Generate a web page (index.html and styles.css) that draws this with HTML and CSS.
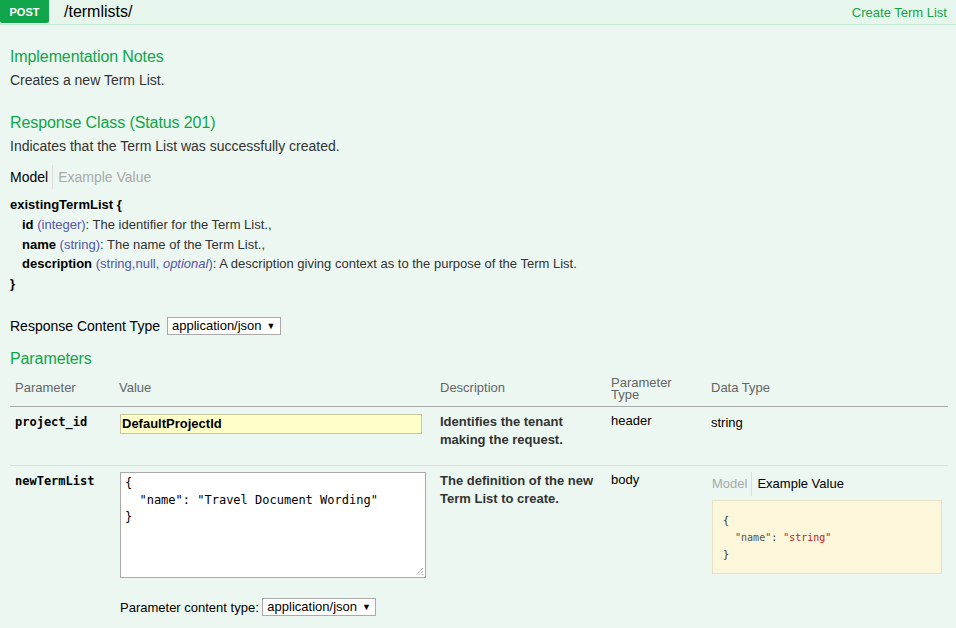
FILE: index.html
```html
<!DOCTYPE html>
<html>
<head>
<meta charset="utf-8">
<link rel="stylesheet" href="styles.css">
</head>
<body>
<div class="op">
  <div class="op-head">
    <span class="verb">POST</span>
    <span class="path">/termlists/</span>
    <span class="summary">Create Term List</span>
  </div>
  <div class="content">
    <h4 class="title t1">Implementation Notes</h4>
    <p class="text">Creates a new Term List.</p>
    <h4 class="title t2">Response Class (Status 201)</h4>
    <p class="text">Indicates that the Term List was successfully created.</p>
    <div class="tabs tabs-main">
      <span class="tab active">Model</span>
      <span class="tab">Example Value</span>
    </div>
    <div class="model">
      <div class="mline"><b>existingTermList {</b></div>
      <div class="mline ind"><b>id</b> <span class="type">(integer)</span>: The identifier for the Term List.,</div>
      <div class="mline ind"><b>name</b> <span class="type">(string)</span>: The name of the Term List.,</div>
      <div class="mline ind"><b>description</b> <span class="type">(string,null, <i>optional</i>)</span>: A description giving context as to the purpose of the Term List.</div>
      <div class="mline"><b>}</b></div>
    </div>
    <div class="rct">
      <span class="rct-label">Response Content Type</span>
      <span class="select">application/json <span class="arrow">▼</span></span>
    </div>
    <h4 class="title t3">Parameters</h4>
    <div class="ptable">
      <div class="prow phead">
        <div class="c1">Parameter</div>
        <div class="c2">Value</div>
        <div class="c3">Description</div>
        <div class="c4 two">Parameter<br>Type</div>
        <div class="c5">Data Type</div>
      </div>
      <div class="prow r1">
        <div class="c1 pname">project_id</div>
        <div class="c2"><div class="input">DefaultProjectId</div></div>
        <div class="c3 pdesc">Identifies the tenant making the request.</div>
        <div class="c4">header</div>
        <div class="c5 dt">string</div>
      </div>
      <div class="prow r2">
        <div class="c1 pname">newTermList</div>
        <div class="c2">
          <div class="textarea"><pre>{
  "name": "Travel Document Wording"
}</pre><svg class="grip" width="9" height="9" viewBox="0 0 9 9"><path d="M8 1L1 8M8 4L4 8M8 7L7 8" stroke="#777" stroke-width="1" stroke-dasharray="1 1"/></svg></div>
          <div class="pct">Parameter content type: <span class="select">application/json <span class="arrow">▼</span></span></div>
        </div>
        <div class="c3 pdesc">The definition of the new Term List to create.</div>
        <div class="c4">body</div>
        <div class="c5">
          <div class="tabs tabs-small">
            <span class="tab">Model</span>
            <span class="tab active">Example Value</span>
          </div>
          <div class="example"><pre>{
  <span class="k">"name"</span>: <span class="s">"string"</span>
}</pre></div>
        </div>
      </div>
    </div>
  </div>
</div>
</body>
</html>
```
FILE: styles.css
```css
html, body {
  margin: 0;
  padding: 0;
}
body {
  background: #ebf7f0;
  font-family: "Liberation Sans", Arial, sans-serif;
  color: #333;
  width: 956px;
  height: 628px;
  overflow: hidden;
}
.op-head {
  display: flex;
  align-items: center;
  height: 24px;
  background: #e7f6ec;
  border-bottom: 1px solid #c3e8d1;
}
.verb {
  width: 49px;
  height: 23px;
  align-self: flex-start;
  background: #10a54a;
  color: #fff;
  font-weight: bold;
  font-size: 11px;
  display: flex;
  align-items: center;
  justify-content: center;
  border-radius: 0 0 2px 2px;
}
.path {
  margin-left: 15px;
  font-size: 16px;
  color: #000;
  flex: 1;
}
.summary {
  font-size: 13px;
  color: #10a54a;
  margin-right: 9px;
}
.content {
  padding: 0 8px 0 10px;
}
.title {
  margin: 0;
  font-size: 16px;
  letter-spacing: -0.1px;
  line-height: 20px;
  font-weight: normal;
  color: #10a54a;
}
.t1 { margin-top: 22px; }
.t2 { margin-top: 24px; }
.t3 { margin-top: 14px; }
.text {
  margin: 4px 0 0;
  font-size: 14px;
  line-height: 18px;
}
.tabs {
  display: flex;
  align-items: center;
  height: 24px;
  font-size: 14px;
}
.tabs-main { margin-top: 10px; }
.tab {
  color: #aaa;
  line-height: 24px;
}
.tab.active { color: #000; }
.tab + .tab {
  border-left: 1px solid #ddd;
  margin-left: 4px;
  padding-left: 5px;
}
.model {
  margin-top: 6px;
  font-size: 13px;
  color: #333;
}
.model b { color: #000; }
.mline {
  line-height: 19.8px;
}
.mline.ind { padding-left: 12px; }
.type { color: #55a; }
.type i { color: #55a; }
.rct {
  margin-top: 23px;
  display: flex;
  align-items: center;
  font-size: 14px;
  color: #000;
}
.rct-label { margin-right: 7px; }
.select {
  display: inline-flex;
  align-items: center;
  height: 16px;
  border: 1px solid #aaa;
  background: #fff;
  padding: 0 4px 0 4px;
  font-size: 13px;
  color: #000;
}
.arrow {
  font-size: 9px;
  margin-left: 5px;
}
.ptable {
  margin-top: 2px;
}
.prow {
  display: flex;
  font-size: 13px;
}
.c1 { width: 104px; padding-left: 5px; }
.c2 { width: 321px; }
.c3 { width: 171px; }
.c4 { width: 100px; }
.c5 { flex: 1; }
.phead {
  height: 35px;
  align-items: center;
  border-bottom: 1px solid #aaa;
  color: #666;
  line-height: 16px;
}
.two { line-height: 12px; padding-top: 1px; }
.r1 {
  height: 59px;
  border-bottom: 1px solid #ddd;
  box-sizing: border-box;
  padding-top: 6px;
  color: #000;
}
.r1 .c2 { padding-top: 1px; }
.r2 {
  padding-top: 6px;
  color: #000;
}
.pname {
  font-family: "DejaVu Sans Mono", monospace;
  font-weight: bold;
  font-size: 12px;
  padding-top: 2px;
}
.pdesc {
  font-weight: bold;
  color: #333;
  line-height: 18px;
  padding-right: 10px;
  box-sizing: border-box;
}
.input {
  margin-left: 1px;
  width: 302px;
  height: 20px;
  box-sizing: border-box;
  border: 1px solid #c8c6a0;
  background: #ffffc8;
  font-weight: bold;
  font-size: 13px;
  line-height: 18px;
  padding-left: 1px;
  color: #000;
}
.dt { padding-top: 2px; }
.textarea {
  position: relative;
  margin-left: 1px;
  width: 306px;
  height: 106px;
  box-sizing: border-box;
  border: 1px solid #aaa;
  background: #fff;
  padding: 2px 3px 2px 4px;
}
.textarea pre {
  margin: 0;
  font-family: "DejaVu Sans Mono", monospace;
  font-size: 12px;
  line-height: 17px;
  color: #000;
}
.grip {
  position: absolute;
  right: 1px;
  bottom: 1px;
}
.pct {
  margin-top: 20px;
  margin-left: 1px;
  font-size: 13px;
  color: #000;
}
.tabs-small {
  font-size: 13px;
  margin-top: 0;
  margin-left: 1px;
}
.tabs-small .tab { color: #aaa; }
.tabs-small .tab.active { color: #000; }
.example {
  margin-top: 4px;
  margin-left: 1px;
  width: 230px;
  height: 74px;
  box-sizing: border-box;
  background: #fcf6db;
  border: 1px solid #e5e0c6;
  padding: 11px 10px;
}
.example pre {
  margin: 0;
  font-family: "DejaVu Sans Mono", monospace;
  font-size: 10px;
  line-height: 17px;
  color: #333;
}
.k { color: #555; }
.s { color: #c41a16; }
```
